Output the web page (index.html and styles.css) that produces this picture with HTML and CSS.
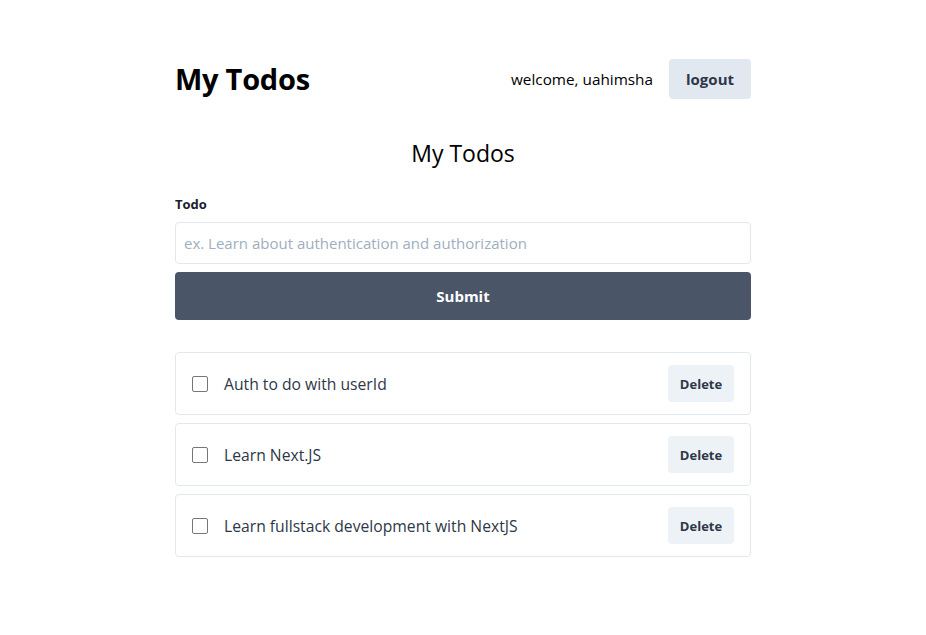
FILE: index.html
```html
<!DOCTYPE html>
<html lang="en">
<head>
<meta charset="utf-8">
<title>My Todos</title>
<link rel="stylesheet" href="styles.css">
</head>
<body>
<main class="page">
  <header class="top">
    <h1 class="brand">My Todos</h1>
    <div class="user">
      <span class="welcome">welcome, uahimsha</span>
      <button class="btn-logout" type="button">logout</button>
    </div>
  </header>

  <h2 class="heading">My Todos</h2>

  <form class="form">
    <label class="label" for="todo">Todo</label>
    <input class="input" id="todo" type="text" placeholder="ex. Learn about authentication and authorization">
    <button class="btn-submit" type="button">Submit</button>
  </form>

  <ul class="list">
    <li class="item">
      <input class="check" type="checkbox">
      <span class="item-text">Auth to do with userId</span>
      <button class="btn-delete" type="button">Delete</button>
    </li>
    <li class="item">
      <input class="check" type="checkbox">
      <span class="item-text">Learn Next.JS</span>
      <button class="btn-delete" type="button">Delete</button>
    </li>
    <li class="item">
      <input class="check" type="checkbox">
      <span class="item-text">Learn fullstack development with NextJS</span>
      <button class="btn-delete" type="button">Delete</button>
    </li>
  </ul>
</main>
</body>
</html>
```

FILE: styles.css
```css
* { box-sizing: border-box; }

body {
  margin: 0;
  background: #ffffff;
  color: #000000;
  font-family: "Open Sans", "Noto Sans", "Liberation Sans", sans-serif;
}

.page {
  max-width: 576px;
  margin: 0 auto;
  padding-top: 59px;
}

.top {
  display: flex;
  align-items: center;
  justify-content: space-between;
  height: 40px;
}

.brand {
  margin: 0;
  font-size: 29px;
  line-height: 36px;
  font-weight: 700;
  letter-spacing: -0.25px;
}

.user {
  display: flex;
  align-items: center;
  gap: 16px;
}

.welcome {
  font-size: 15.3px;
  font-weight: 500;
  color: #000;
}

.btn-logout {
  font-family: inherit;
  height: 40px;
  width: 82px;
  border: 0;
  border-radius: 4px;
  background: #e2e8f0;
  color: #2d3748;
  font-size: 15px;
  font-weight: 700;
  cursor: pointer;
}

.heading {
  margin: 38px 0 0;
  text-align: center;
  font-size: 23px;
  line-height: 32px;
  font-weight: 500;
}

.form {
  display: flex;
  flex-direction: column;
  margin-top: 25px;
}

.label {
  font-size: 13px;
  line-height: 20px;
  font-weight: 700;
  color: #1a202c;
  margin-bottom: 8px;
}

.input {
  font-family: inherit;
  height: 42px;
  border: 1px solid #e2e8f0;
  border-radius: 4px;
  padding: 0 8px;
  font-size: 15px;
  color: #2d3748;
}

.input::placeholder { color: #a0aec0; }

.btn-submit {
  font-family: inherit;
  margin-top: 8px;
  height: 48px;
  border: 0;
  border-radius: 4px;
  background: #4a5568;
  color: #ffffff;
  font-size: 15px;
  font-weight: 700;
}

.list {
  list-style: none;
  margin: 32px 0 0;
  padding: 0;
  display: flex;
  flex-direction: column;
  gap: 8px;
}

.item {
  display: flex;
  align-items: center;
  height: 63px;
  padding: 0 16px;
  border: 1px solid #e2e8f0;
  border-radius: 4px;
}

.check {
  appearance: none;
  width: 16px;
  height: 16px;
  margin: 0 16px 0 0;
  border: 1px solid #767676;
  border-radius: 2px;
  background: #fff;
}

.item-text {
  flex: 1;
  font-size: 15.7px;
  font-weight: 500;
  color: #2d3748;
}

.btn-delete {
  font-family: inherit;
  width: 66px;
  height: 37px;
  border: 0;
  border-radius: 4px;
  background: #edf2f7;
  color: #2d3748;
  font-size: 13px;
  font-weight: 700;
}
```
